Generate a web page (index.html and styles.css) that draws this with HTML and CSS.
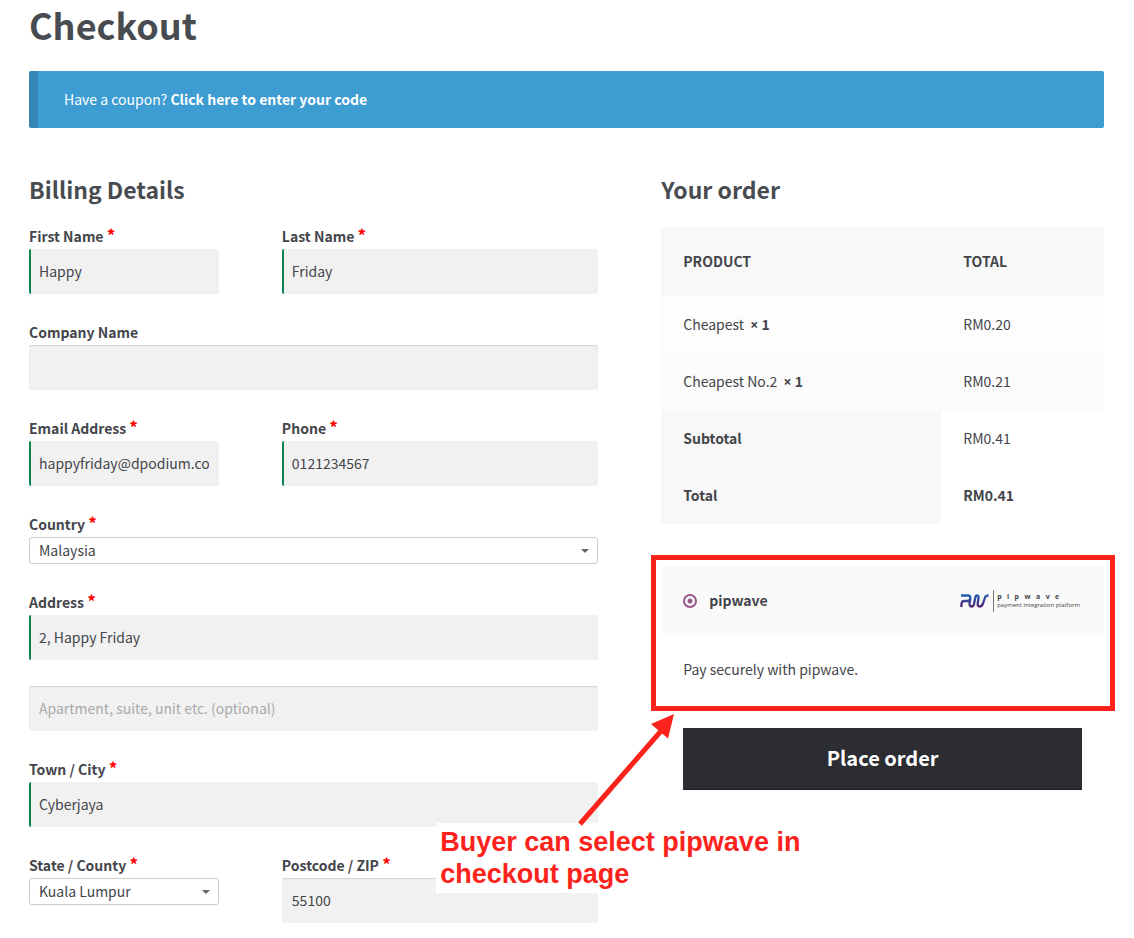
FILE: index.html
```html
<!DOCTYPE html>
<html lang="en">
<head>
<meta charset="utf-8">
<title>Checkout</title>
<link rel="stylesheet" href="styles.css">
</head>
<body>
<main class="page">
  <h1 class="page-title">Checkout</h1>
  <p class="notice">Have a coupon? <a class="notice-link" href="#coupon">Click here to enter your code</a></p>
  <form class="checkout">
    <section class="billing">
      <h2 class="section-title">Billing Details</h2>
      <div class="fields">
        <div class="field-pair">
          <div class="field">
            <label class="label" for="first-name">First Name <span class="required">*</span></label>
            <input class="input valid" id="first-name" type="text" value="Happy">
          </div>
          <div class="field">
            <label class="label" for="last-name">Last Name <span class="required">*</span></label>
            <input class="input valid" id="last-name" type="text" value="Friday">
          </div>
        </div>
        <div class="field">
          <label class="label" for="company">Company Name</label>
          <input class="input" id="company" type="text">
        </div>
        <div class="field-pair">
          <div class="field">
            <label class="label" for="email">Email Address <span class="required">*</span></label>
            <input class="input valid" id="email" type="email" value="happyfriday@dpodium.com">
          </div>
          <div class="field">
            <label class="label" for="phone">Phone <span class="required">*</span></label>
            <input class="input valid" id="phone" type="tel" value="0121234567">
          </div>
        </div>
        <div class="field">
          <label class="label" for="country">Country <span class="required">*</span></label>
          <div class="select-box"><select class="select" id="country"><option>Malaysia</option></select></div>
        </div>
        <div class="field">
          <label class="label" for="address">Address <span class="required">*</span></label>
          <input class="input valid" id="address" type="text" value="2, Happy Friday">
        </div>
        <div class="field">
          <input class="input" id="address-2" type="text" aria-label="Address line 2" placeholder="Apartment, suite, unit etc. (optional)">
        </div>
        <div class="field">
          <label class="label" for="city">Town / City <span class="required">*</span></label>
          <input class="input valid" id="city" type="text" value="Cyberjaya">
        </div>
        <div class="field-pair">
          <div class="field">
            <label class="label" for="state">State / County <span class="required">*</span></label>
            <div class="select-box"><select class="select" id="state"><option>Kuala Lumpur</option></select></div>
          </div>
          <div class="field">
            <label class="label" for="postcode">Postcode / ZIP <span class="required">*</span></label>
            <input class="input" id="postcode" type="text" value="55100">
          </div>
        </div>
      </div>
    </section>
    <section class="order">
      <h2 class="section-title">Your order</h2>
      <table class="order-table">
        <colgroup><col class="col-product"><col></colgroup>
        <thead>
          <tr><th scope="col">PRODUCT</th><th scope="col">TOTAL</th></tr>
        </thead>
        <tbody>
          <tr><td>Cheapest&nbsp; <strong><span class="times">×</span> 1</strong></td><td>RM0.20</td></tr>
          <tr><td>Cheapest No.2&nbsp; <strong><span class="times">×</span> 1</strong></td><td>RM0.21</td></tr>
        </tbody>
        <tfoot>
          <tr><th scope="row">Subtotal</th><td>RM0.41</td></tr>
          <tr><th scope="row">Total</th><td><strong>RM0.41</strong></td></tr>
        </tfoot>
      </table>
      <div class="payment">
        <div class="method">
          <input class="radio" id="pipwave" type="radio" name="payment" checked>
          <label class="method-name" for="pipwave">pipwave</label>
          <div class="logo">
            <svg class="logo-mark" width="29" height="14" viewBox="0 0 29 14" aria-hidden="true">
              <defs>
                <linearGradient id="mark" gradientUnits="userSpaceOnUse" x1="0" y1="0" x2="0" y2="14">
                  <stop offset="0" stop-color="#1f62b4"/><stop offset="1" stop-color="#56206f"/>
                </linearGradient>
              </defs>
              <path d="M1 1.500H8Q10.800 1.500 10.300 4.200Q9.800 7 7 7H4Q2 7 1.600 9.500L1.200 13M10.300 4.200L9.600 9Q9.200 12.500 11.500 12.500Q13.500 12.500 14 10L15.200 4Q15.700 1.500 17 1.500Q18.900 1.500 18.500 4L17.700 9.500Q17.400 12.500 19.500 12.500Q21.800 12.500 22.800 10L25 3.500Q25.700 1.500 28.500 1.500" fill="none" stroke="url(#mark)" stroke-width="2.300"/>
            </svg>
            <div class="logo-text">
              <span class="logo-name">p&nbsp;&nbsp; i&nbsp;&nbsp; p&nbsp;&nbsp; w&nbsp;&nbsp; a&nbsp;&nbsp; v&nbsp;&nbsp; e</span>
              <span class="logo-tag">payment integration platform</span>
            </div>
          </div>
        </div>
        <p class="method-info">Pay securely with pipwave.</p>
        <div class="highlight"></div>
        <p class="callout">Buyer can select pipwave in<br>checkout page</p>
        <svg class="arrow" width="98" height="114" viewBox="0 0 98 114" aria-hidden="true">
          <path d="M4 110L85 17" stroke="#fb231c" stroke-width="5"/>
          <path d="M98 0L75 10L92 24.500Z" fill="#fb231c"/>
        </svg>
      </div>
      <div class="place-order">
        <button class="button" type="button">Place order</button>
      </div>
    </section>
  </form>
</main>
</body>
</html>
```
FILE: styles.css
```css
* {
  box-sizing: border-box;
}

body {
  margin: 0;
  background: #fff;
  color: #43454b;
  font-family: "Noto Sans CJK SC", "Noto Sans", sans-serif;
  font-size: 14px;
  line-height: 25px;
}

h1, h2, p {
  margin: 0;
}

.page {
  padding: 0 30px 15px 29px;
}

.page-title {
  padding-bottom: 23px;
  color: #484c51;
  font-size: 36px;
  line-height: 48px;
}

.notice {
  margin-bottom: 40px;
  padding: 16px 26px;
  border-left: 9px solid #3585b5;
  border-radius: 2px;
  background: #3d9cd2;
  color: #fff;
}

.notice-link {
  color: #fff;
  font-weight: 700;
  text-decoration: none;
}

.checkout {
  display: grid;
  grid-template-columns: 9fr 7fr;
  gap: 63px;
}

.section-title {
  padding: 4px 0 17px;
  color: #484c51;
  font-size: 23px;
  line-height: 35px;
}

.fields {
  display: grid;
  gap: 26px;
}

.field-pair {
  display: grid;
  grid-template-columns: 3fr 5fr;
  align-items: start;
  gap: 63px;
}

.field {
  display: grid;
  min-width: 0;
}

.label {
  font-weight: 700;
}

.required {
  color: #f00;
  font-size: 17px;
  line-height: 1;
}

.input {
  width: 100%;
  min-width: 0;
  height: 45px;
  padding: 0 10px 2px;
  border: 0;
  border-radius: 2px;
  background: #f1f1f1;
  box-shadow: inset 0 1px 1px rgba(0, 0, 0, 0.125);
  color: #43454b;
  font: inherit;
}

.valid {
  padding-left: 8px;
  border-left: 2px solid #0f834d;
  box-shadow: none;
}

.input::placeholder {
  color: #a9a9a9;
}

.select-box {
  position: relative;
}

.select-box::after {
  content: "";
  position: absolute;
  top: 12px;
  right: 9px;
  border: 4px solid transparent;
  border-top-color: #666;
  border-bottom: 0;
  pointer-events: none;
}

.select {
  display: block;
  width: 100%;
  height: 27px;
  padding: 0 9px;
  border: 1px solid #ccc;
  border-radius: 3px;
  appearance: none;
  background: #fff;
  color: #43454b;
  font: inherit;
}

.order-table {
  width: 100%;
  margin: 3px 0 42px;
  border-spacing: 0;
  table-layout: fixed;
  text-align: left;
}

.col-product {
  width: 280px;
}

.order-table th,
.order-table td {
  padding: 16px 22px;
}

.order-table thead th {
  padding: 22px;
  background: #f8f8f8;
}

.order-table tbody td {
  background: #fdfdfd;
}

.order-table tbody tr:nth-child(2) td {
  background: #fbfbfb;
}

.order-table tfoot th {
  background: #f8f8f8;
}

.times {
  font-family: "Noto Sans", sans-serif;
  line-height: 1;
}

.payment {
  position: relative;
}

.method {
  display: flex;
  align-items: center;
  padding: 22px 24px 22px 22px;
  background: #fafafa;
}

.radio {
  width: 14px;
  height: 14px;
  margin: 0 12px 0 0;
  border: 2px solid #96588a;
  border-radius: 50%;
  appearance: none;
  background: radial-gradient(circle, #96588a 2px, transparent 3px);
}

.method-name {
  font-weight: 700;
}

.logo {
  display: flex;
  align-items: center;
  gap: 4px;
  margin-left: auto;
}

.logo-text {
  display: grid;
  padding: 3px 0 3px 3px;
  border-left: 1px solid #777;
  color: #444;
  font-family: "Open Sans", sans-serif;
  line-height: 8px;
  white-space: nowrap;
}

.logo-name {
  font-size: 7px;
  font-weight: 700;
}

.logo-tag {
  font-size: 6px;
}

.method-info {
  padding: 22px;
}

.highlight {
  position: absolute;
  inset: -11px -11px -7px -10px;
  border: 5px solid #fb231c;
}

.callout {
  position: absolute;
  top: 257px;
  left: -225px;
  padding: 3px 4px;
  background: #fff;
  color: #fb231c;
  font: 700 27px/32px "Liberation Sans", Arial, sans-serif;
  white-space: nowrap;
}

.arrow {
  position: absolute;
  top: 148px;
  left: -85px;
}

.place-order {
  padding: 24px 22px;
}

.button {
  width: 100%;
  height: 62px;
  padding-bottom: 3px;
  border: 0;
  border-bottom: 1px solid #1c1d22;
  background: #2c2d33;
  color: #fff;
  font: inherit;
  font-size: 20px;
  font-weight: 700;
}
```
